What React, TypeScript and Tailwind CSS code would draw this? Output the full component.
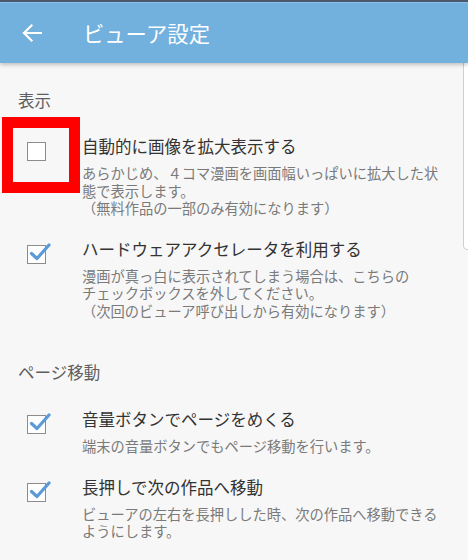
import React from "react";

const font = { fontFamily: '"Noto Sans CJK JP", "Noto Sans", sans-serif' };

function Box({ checked }: { checked: boolean }) {
  return (
    <div className="relative w-[19px] h-[19px] border-[1.5px] border-[#8c8c8c] bg-white shrink-0">
      {checked && (
        <svg
          className="absolute left-[1px] top-[-6px]"
          width="22"
          height="22"
          viewBox="0 0 22 22"
        >
          <path
            d="M2.5 13.5 L8 18.5 L20 5"
            fill="none"
            stroke="#5b9ad6"
            strokeWidth="3.2"
            strokeLinecap="round"
            strokeLinejoin="round"
          />
        </svg>
      )}
    </div>
  );
}

function Item({
  checked,
  title,
  lines,
  className,
}: {
  checked: boolean;
  title: string;
  lines: string[];
  className?: string;
}) {
  return (
    <div className={"flex " + (className ?? "")}>
      <div className="w-[82px] pl-[27px] pt-[8px] shrink-0">
        <Box checked={checked} />
      </div>
      <div className="flex flex-col">
        <div className="text-[16.5px] leading-[24px] text-[#333333] whitespace-nowrap">
          {title}
        </div>
        <div className="mt-[6px] text-[14.25px] leading-[17.5px] text-[#7a7a7a] whitespace-nowrap">
          {lines.map((l, i) => (
            <div key={i}>{l}</div>
          ))}
        </div>
      </div>
    </div>
  );
}

export default function App() {
  return (
    <div
      className="relative w-[468px] h-[560px] overflow-hidden bg-[#f7f7f7] flex flex-col"
      style={font}
    >
      <div className="h-[2px] bg-[#4d5a6c] shrink-0" />
      <div className="relative z-10 h-[61px] bg-[#72b0de] flex items-center shrink-0 shadow-[0_2px_4px_rgba(0,0,0,0.22)] border-t border-[#8ec2ea]">
        <svg
          className="ml-[22px]"
          width="20"
          height="20"
          viewBox="0 0 20 20"
        >
          <path
            d="M2 10 H19 M9.5 2.5 L2 10 L9.5 17.5"
            fill="none"
            stroke="#ffffff"
            strokeWidth="2.2"
            strokeLinecap="square"
          />
        </svg>
        <div className="ml-[41px] text-[21.3px] leading-[28px] text-white whitespace-nowrap">
          ビューア設定
        </div>
      </div>

      <div className="flex flex-col">
        <div className="mt-[25px] pl-[18px] text-[16.5px] leading-[24px] text-[#5f5f5f]">
          表示
        </div>
        <Item
          className="mt-[22px]"
          checked={false}
          title="自動的に画像を拡大表示する"
          lines={[
            "あらかじめ、４コマ漫画を画面幅いっぱいに拡大した状",
            "態で表示します。",
            "（無料作品の一部のみ有効になります）",
          ]}
        />
        <Item
          className="mt-[20px]"
          checked={true}
          title="ハードウェアアクセレータを利用する"
          lines={[
            "漫画が真っ白に表示されてしまう場合は、こちらの",
            "チェックボックスを外してください。",
            "（次回のビューア呼び出しから有効になります）",
          ]}
        />
        <div className="mt-[41px] pl-[18px] text-[16.5px] leading-[24px] text-[#5f5f5f]">
          ページ移動
        </div>
        <Item
          className="mt-[23px]"
          checked={true}
          title="音量ボタンでページをめくる"
          lines={["端末の音量ボタンでもページ移動を行います。"]}
        />
        <Item
          className="mt-[20px]"
          checked={true}
          title="長押しで次の作品へ移動"
          lines={[
            "ビューアの左右を長押しした時、次の作品へ移動できる",
            "ようにします。",
          ]}
        />
      </div>

      {/* red annotation frame */}
      <div className="absolute left-[2px] top-[117px] w-[78px] h-[76px] border-[11px] border-[#ff0000]" />
      {/* scrollbar */}
      <div className="absolute left-[463px] top-[58px] w-[8px] h-[192px] rounded-[4px] border border-[#cfcfcf] bg-white" />
    </div>
  );
}
